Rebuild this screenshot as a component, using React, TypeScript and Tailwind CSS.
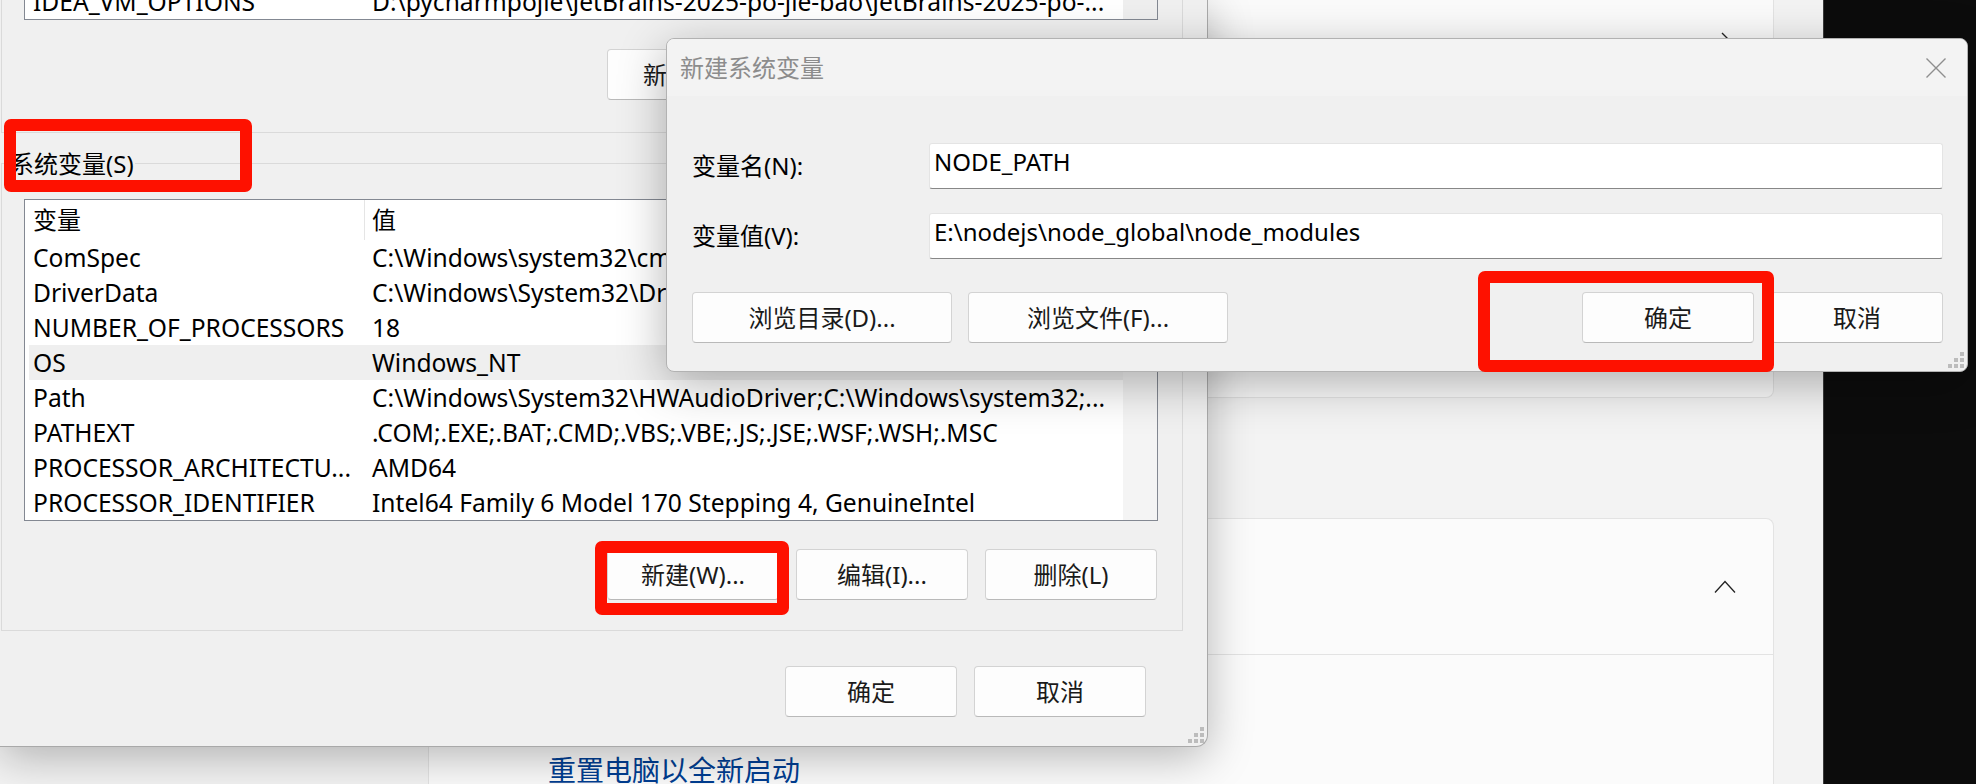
import React from "react";

function Btn({ children, className }: { children: React.ReactNode; className: string }) {
  return (
    <div
      className={
        "flex items-center justify-center h-[51px] rounded-[4px] border border-[#d3d3d3] border-b-[#b9b9b9] bg-[#fdfdfd] text-[24px] text-[#1a1a1a] leading-none whitespace-nowrap " +
        className
      }
    >
      {children}
    </div>
  );
}

function Grip() {
  return (
    <svg width="16" height="16" viewBox="0 0 16 16">
      <g fill="#bcbcbc">
        <rect x="12" y="0" width="4" height="4" />
        <rect x="6" y="6" width="4" height="4" />
        <rect x="12" y="6" width="4" height="4" />
        <rect x="0" y="12" width="4" height="4" />
        <rect x="6" y="12" width="4" height="4" />
        <rect x="12" y="12" width="4" height="4" />
      </g>
    </svg>
  );
}

const rows: [string, string][] = [
  ["ComSpec", "C:\\Windows\\system32\\cmd.exe"],
  ["DriverData", "C:\\Windows\\System32\\Drivers\\DriverData"],
  ["NUMBER_OF_PROCESSORS", "18"],
  ["OS", "Windows_NT"],
  ["Path", "C:\\Windows\\System32\\HWAudioDriver;C:\\Windows\\system32;..."],
  ["PATHEXT", ".COM;.EXE;.BAT;.CMD;.VBS;.VBE;.JS;.JSE;.WSF;.WSH;.MSC"],
  ["PROCESSOR_ARCHITECTU...", "AMD64"],
  ["PROCESSOR_IDENTIFIER", "Intel64 Family 6 Model 170 Stepping 4, GenuineIntel"],
];

export default function App() {
  return (
    <div className="relative w-[1976px] h-[784px] overflow-hidden bg-[#0c0c0c] font-['Noto_Sans','Noto_Sans_CJK_SC',sans-serif] text-black">
      {/* Settings window behind */}
      <div className="absolute left-0 top-0 w-[1824px] h-[784px] bg-[#f3f3f3] border-r border-[#3c3c3c] flex flex-col pl-[428px] pr-[49px]">
        <div className="h-[398px] shrink-0 bg-[#fbfbfb] border-x border-b border-[#e3e3e3] rounded-b-[8px] flex justify-end items-start pt-[28px] pr-[37px]">
          <svg width="20" height="30" viewBox="0 0 20 30" fill="none" stroke="#222" strokeWidth="1.4">
            <path d="M6 5 L16 15 L6 25" />
          </svg>
        </div>
        <div className="mt-[120px] flex-1 bg-[#fbfbfb] border-x border-t border-[#e3e3e3] rounded-t-[8px] flex flex-col">
          <div className="h-[136px] shrink-0 border-b border-[#e3e3e3] flex items-center justify-end pr-[37px]">
            <svg width="22" height="14" viewBox="0 0 22 14" fill="none" stroke="#222" strokeWidth="1.3">
              <path d="M1 12.5 L11 1.5 L21 12.5" />
            </svg>
          </div>
          <div className="pl-[119px] pt-[101px] text-[28px] leading-[28px] text-[#003e92] whitespace-nowrap">
            重置电脑以全新启动
          </div>
        </div>
      </div>

      {/* Environment variables dialog */}
      <div className="absolute left-0 top-0 w-[1208px] h-[747px] bg-[#f0f0f0] border-r border-b border-[#a9a9a9] rounded-br-[12px] shadow-[0_10px_45px_rgba(0,0,0,0.28)] flex flex-col text-[24px]">
        {/* user variables group (bottom part) */}
        <div className="ml-[1px] w-[1182px] h-[133px] shrink-0 border-x border-b border-[#dadada] flex flex-col">
          <div className="ml-[22px] w-[1134px] h-[20px] border-x border-b border-[#838892] flex overflow-hidden text-[24.6px]">
            <div className="w-[1098px] bg-white flex flex-col justify-end overflow-hidden">
              <div className="h-[35px] shrink-0 flex leading-[35px] whitespace-nowrap">
                <div className="w-[340px] pl-[8px]">IDEA_VM_OPTIONS</div>
                <div className="pl-[7px]">D:\pycharmpojie\JetBrains-2025-po-jie-bao\JetBrains-2025-po-...</div>
              </div>
            </div>
            <div className="w-[34px] bg-[#efefef]" />
          </div>
          <div className="mt-[29px] flex justify-end gap-[17px] pr-[25px]">
            <Btn className="w-[172px]">新建(N)...</Btn>
            <Btn className="w-[172px]">编辑(E)...</Btn>
            <Btn className="w-[172px]">删除(D)</Btn>
          </div>
        </div>

        {/* system variables group */}
        <div className="relative mt-[30px] ml-[1px] w-[1182px] h-[468px] shrink-0 border border-[#dadada] flex flex-col">
          <div className="absolute left-[7px] top-[-18px] bg-[#f0f0f0] px-[1px] leading-[35px] whitespace-nowrap">系统变量(S)</div>
          <div className="mt-[35px] ml-[22px] w-[1134px] h-[322px] border border-[#838892] flex text-[24.6px]">
            <div className="w-[1098px] bg-white flex flex-col overflow-hidden">
              <div className="h-[40px] flex leading-[40px] whitespace-nowrap text-[24px]">
                <div className="w-[340px] pl-[8px] border-r border-[#e5e5e5]">变量</div>
                <div className="pl-[7px]">值</div>
              </div>
              {rows.map(([k, v]) => (
                <div
                  key={k}
                  className={
                    k === "OS"
                      ? "ml-[4px] h-[35px] flex leading-[35px] whitespace-nowrap bg-[#efefef]"
                      : "ml-[4px] h-[35px] flex leading-[35px] whitespace-nowrap"
                  }
                >
                  <div className="w-[336px] pl-[4px] shrink-0">{k}</div>
                  <div className="pl-[7px]">{v}</div>
                </div>
              ))}
            </div>
            <div className="w-[34px] bg-[#f4f4f4]" />
          </div>
          <div className="mt-[28px] flex justify-end gap-[17px] pr-[25px]">
            <Btn className="w-[172px]">新建(W)...</Btn>
            <Btn className="w-[172px]">编辑(I)...</Btn>
            <Btn className="w-[172px]">删除(L)</Btn>
          </div>
        </div>

        <div className="mt-[35px] flex justify-end gap-[17px] pr-[61px]">
          <Btn className="w-[172px]">确定</Btn>
          <Btn className="w-[172px]">取消</Btn>
        </div>
        <div className="absolute right-[3px] bottom-[3px]">
          <Grip />
        </div>
      </div>

      {/* New system variable dialog */}
      <div className="absolute left-[666px] top-[38px] w-[1302px] h-[334px] bg-[#f0f0f0] border border-[#b2b2b2] rounded-[8px] overflow-hidden shadow-[0_12px_48px_rgba(0,0,0,0.3)] flex flex-col text-[24px]">
        <div className="h-[57px] shrink-0 bg-[#f3f3f3] flex items-center pl-[13px] pr-[21px]">
          <div className="text-[#8c8c8c] whitespace-nowrap">新建系统变量</div>
          <div className="flex-1" />
          <svg width="20" height="20" viewBox="0 0 20 20" stroke="#8e8e8e" strokeWidth="1.4">
            <path d="M0.5 0.5 L19.5 19.5 M19.5 0.5 L0.5 19.5" />
          </svg>
        </div>
        <div className="flex flex-col pl-[25px] pr-[24px]">
          <div className="mt-[47px] h-[46px] flex items-center">
            <div className="w-[237px] whitespace-nowrap">变量名(N):</div>
            <div className="flex-1 h-[46px] bg-white border border-[#e4e4e4] border-b-[#878787] rounded-[3px] pl-[4px] leading-[35px] whitespace-nowrap">
              NODE_PATH
            </div>
          </div>
          <div className="mt-[24px] h-[46px] flex items-center">
            <div className="w-[237px] whitespace-nowrap">变量值(V):</div>
            <div className="flex-1 h-[46px] bg-white border border-[#e4e4e4] border-b-[#878787] rounded-[3px] pl-[4px] leading-[35px] whitespace-nowrap">
              E:\nodejs\node_global\node_modules
            </div>
          </div>
          <div className="mt-[33px] flex">
            <Btn className="w-[260px]">浏览目录(D)...</Btn>
            <Btn className="w-[260px] ml-[16px]">浏览文件(F)...</Btn>
            <div className="flex-1" />
            <Btn className="w-[172px]">确定</Btn>
            <Btn className="w-[172px] ml-[17px]">取消</Btn>
          </div>
        </div>
        <div className="absolute right-[3px] bottom-[3px]">
          <Grip />
        </div>
      </div>

      {/* Red annotation boxes */}
      <div className="absolute left-[4px] top-[119px] w-[248px] h-[73px] border-[12px] border-[#fe1100] rounded-[7px]" />
      <div className="absolute left-[595px] top-[541px] w-[194px] h-[74px] border-[12px] border-[#fe1100] rounded-[7px]" />
      <div className="absolute left-[1478px] top-[271px] w-[296px] h-[101px] border-[12px] border-[#fe1100] rounded-[7px]" />
    </div>
  );
}
